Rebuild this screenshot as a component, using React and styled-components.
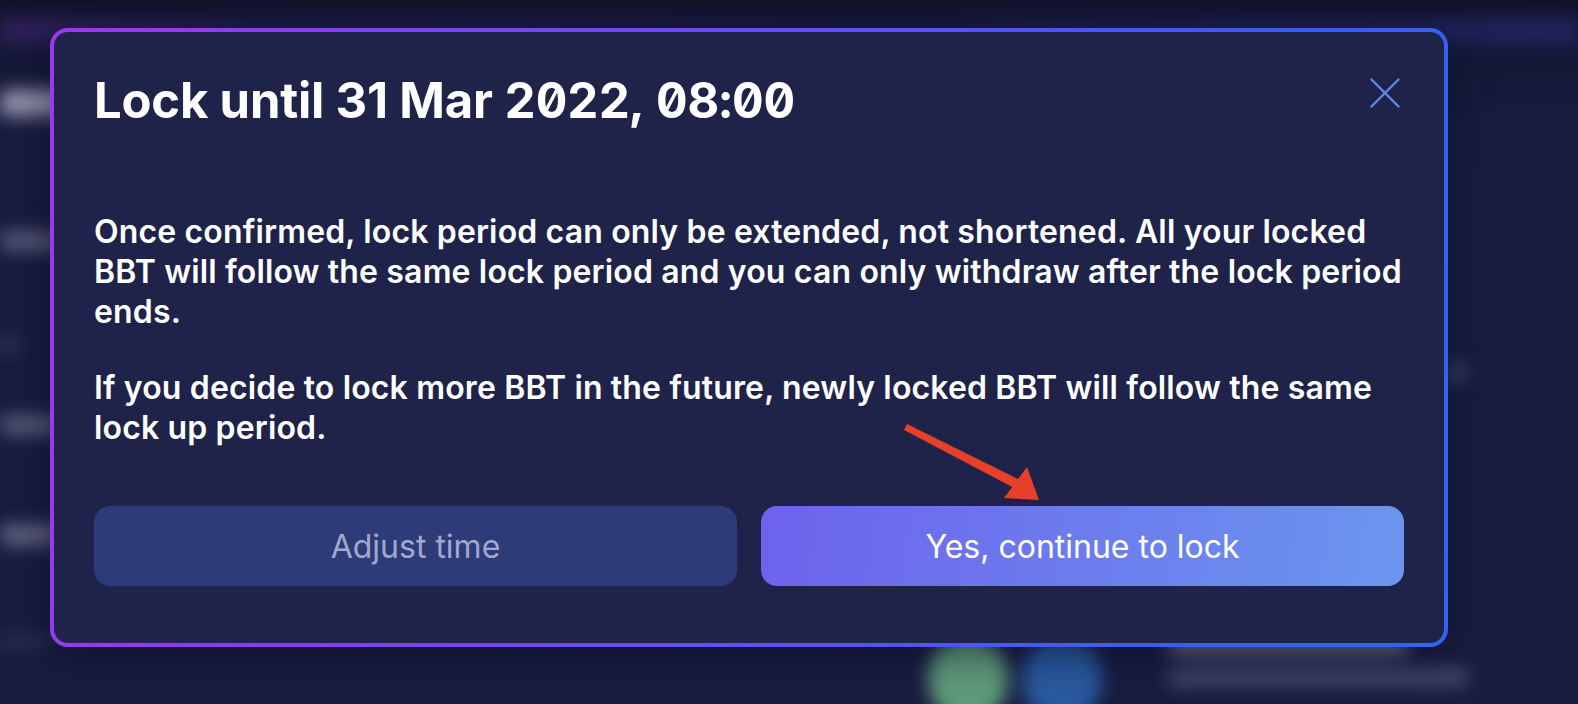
import React from "react";
import { styled, createGlobalStyle } from "styled-components";

const GlobalStyle = createGlobalStyle`
  html, body {
    margin: 0;
    padding: 0;
    background: #161a38;
  }
  * {
    box-sizing: border-box;
  }
`;

const App = () => {
  return (
    <>
      <GlobalStyle />
      <Page>
        <Backdrop>
          <TopBar />
          <Body>
            <Sidebar>
              <Blob $top={30} $w={70} $h={26} $o={0.8} />
              <Blob $top={116} $w={60} $h={18} $o={0.45} />
              <Blob $top={86} $w={18} $h={18} $o={0.18} />
              <Blob $top={62} $w={60} $h={18} $o={0.45} />
              <Blob $top={91} $w={60} $h={20} $o={0.5} />
              <Blob $top={90} $w={50} $h={12} $o={0.14} />
            </Sidebar>
            <Main>
              <SideDot />
              <BottomRow>
                <Coin $color="#5f9c7c" />
                <Coin $color="#2a5aa0" />
                <Figures>
                  <Blob $top={0} $w={240} $h={22} $o={0.6} />
                  <Blob $top={14} $w={300} $h={18} $o={0.3} />
                </Figures>
              </BottomRow>
            </Main>
          </Body>
        </Backdrop>

        <Dialog>
          <Header>
            <Title>
              Lock until 31 Mar <Digits>2022, 08:00</Digits>
            </Title>
            <CloseButton aria-label="Close">
              <svg width="30" height="30" viewBox="0 0 30 30" fill="none">
                <path
                  d="M1.5 1.5L28.5 28.5M28.5 1.5L1.5 28.5"
                  stroke="#5f88ee"
                  strokeWidth="2.4"
                  strokeLinecap="round"
                />
              </svg>
            </CloseButton>
          </Header>

          <Text>
            Once confirmed, lock period can only be extended, not shortened. All
            your locked BBT will follow the same lock period and you can only
            withdraw after the lock period ends.
          </Text>
          <Text>
            If you decide to lock more BBT in the future, newly locked BBT will
            follow the same lock up period.
          </Text>

          <Actions>
            <Button>Adjust time</Button>
            <Button $primary>Yes, continue to lock</Button>
          </Actions>
        </Dialog>

        <Arrow width="180" height="100" viewBox="0 0 180 100">
          <polygon points="24,20 27,14 144,72 138,80" fill="#e5412a" />
          <polygon points="159,90 124,88 147,57" fill="#e5412a" />
        </Arrow>
      </Page>
    </>
  );
};

export default App;

const Page = styled.div`
  position: relative;
  width: 1578px;
  height: 704px;
  overflow: hidden;
  background: linear-gradient(180deg, #10132a 0px, #141834 40px, #181c3e 120px, #191d40 100%);
  font-family: Inter, "Noto Sans", sans-serif;
`;

const Backdrop = styled.div`
  display: grid;
  grid-template-rows: 60px 1fr;
  height: 100%;
  filter: blur(9px);
`;

const TopBar = styled.div`
  margin-top: 18px;
  height: 26px;
  background: linear-gradient(90deg, #3a2468 0%, #1e1c4a 20%, #1b1c48 60%, #24276a 100%);
  opacity: 0.8;
`;

const Body = styled.div`
  display: grid;
  grid-template-columns: 60px 1fr;
`;

const Sidebar = styled.div`
  display: flex;
  flex-direction: column;
  align-items: flex-start;
`;

const Blob = styled.div`
  margin-top: ${(p) => p.$top}px;
  width: ${(p) => p.$w}px;
  height: ${(p) => p.$h}px;
  border-radius: 6px;
  background: #b4b6cc;
  opacity: ${(p) => p.$o};
`;

const Main = styled.div`
  display: flex;
  flex-direction: column;
  justify-content: space-between;
`;

const SideDot = styled.div`
  align-self: flex-end;
  margin: 300px 110px 0 0;
  width: 24px;
  height: 24px;
  border-radius: 50%;
  background: #6a6e90;
  opacity: 0.4;
`;

const BottomRow = styled.div`
  display: flex;
  align-items: flex-start;
  gap: 14px;
  padding-left: 868px;
  height: 64px;
`;

const Coin = styled.div`
  width: 80px;
  height: 90px;
  margin-top: -6px;
  border-radius: 50%;
  background: ${(p) => p.$color};
`;

const Figures = styled.div`
  display: flex;
  flex-direction: column;
  margin-left: 52px;
  margin-top: -8px;
`;

const Dialog = styled.div`
  position: absolute;
  left: 50px;
  top: 28px;
  width: 1398px;
  height: 619px;
  padding: 40px 40px 0;
  border: 4px solid transparent;
  border-radius: 18px;
  background:
    linear-gradient(#1f2249, #1f2249) padding-box,
    linear-gradient(100deg, #9b38ec 0%, #6a4cf0 45%, #3e5cf0 80%, #3264f0 100%) border-box;
  box-shadow: 0 10px 40px rgba(8, 10, 30, 0.5);
  color: #fff;
`;

const Header = styled.div`
  display: flex;
  justify-content: space-between;
  align-items: flex-start;
  margin-bottom: 82px;
`;

const Title = styled.h2`
  margin: 0;
  font-size: 49px;
  line-height: 58px;
  font-weight: 700;
  letter-spacing: -0.2px;
  color: #fff;
`;

const Digits = styled.span`
  font-feature-settings: "tnum" 1, "zero" 1;
`;

const CloseButton = styled.button`
  margin: 6px 4px 0 0;
  padding: 0;
  border: none;
  background: none;
  display: flex;
  cursor: pointer;
`;

const Text = styled.p`
  margin: 0 -18px 36px 0;
  font-size: 32px;
  line-height: 40px;
  font-weight: 600;
  color: #fff;
  letter-spacing: 0.15px;
  &:last-of-type {
    margin-bottom: 58px;
  }
`;

const Actions = styled.div`
  display: grid;
  grid-template-columns: 1fr 1fr;
  gap: 24px;
`;

const Button = styled.button`
  height: 80px;
  border: none;
  border-radius: 16px;
  font-family: Inter, "Noto Sans", sans-serif;
  font-size: 32px;
  font-weight: 400;
  cursor: pointer;
  color: ${(p) => (p.$primary ? "#ffffff" : "#a2a8cf")};
  background: ${(p) =>
    p.$primary
      ? "linear-gradient(100deg, #6d62ec 0%, #6c7cee 50%, #6b96ef 100%)"
      : "#2d3b78"};
`;

const Arrow = styled.svg`
  position: absolute;
  left: 880px;
  top: 410px;
`;
